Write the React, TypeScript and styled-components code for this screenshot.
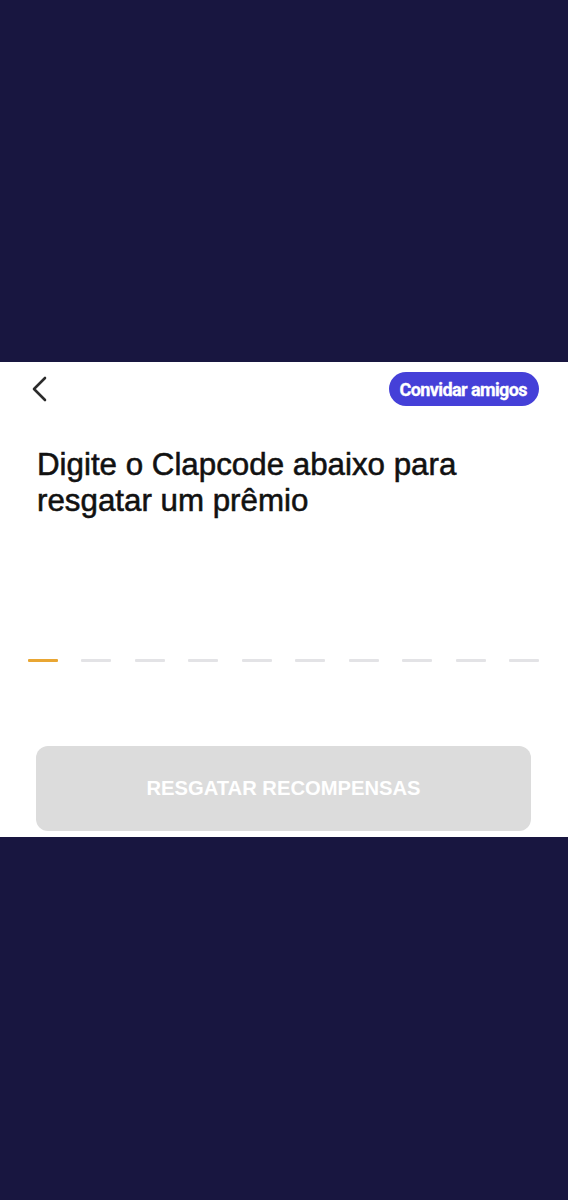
import React from 'react';
import styled, { createGlobalStyle } from 'styled-components';

const GlobalStyle = createGlobalStyle`
  html, body {
    margin: 0;
    padding: 0;
    background: #181640;
  }
  * { box-sizing: border-box; }
`;

const Screen = styled.div`
  min-height: 1200px;
  display: flex;
  flex-direction: column;
  background: #181640;
`;

const Backdrop = styled.div`
  height: 362px;
`;

const Sheet = styled.div`
  background: #ffffff;
  height: 475px;
  display: flex;
  flex-direction: column;
  padding: 10px 29px 6px 28px;
`;

const TopBar = styled.div`
  display: flex;
  align-items: center;
  justify-content: space-between;
  height: 34px;
`;

const BackButton = styled.button`
  border: none;
  background: none;
  padding: 0;
  margin-left: 3px;
  width: 20px;
  height: 26px;
  display: flex;
  align-items: center;
  cursor: pointer;
`;

const InviteButton = styled.button`
  height: 34px;
  padding: 0 12px 0 11px;
  border: none;
  border-radius: 17px;
  background: #4540d8;
  color: #ffffff;
  font-family: Roboto, "Liberation Sans", sans-serif;
  font-weight: 700;
  font-size: 18px;
  letter-spacing: -0.6px;
  -webkit-text-stroke: 0.3px #ffffff;
  cursor: pointer;
`;

const Title = styled.h1`
  margin: 41px 0 0 9px;
  font-family: "Liberation Sans", Arial, sans-serif;
  font-weight: 400;
  font-size: 31.3px;
  line-height: 36px;
  color: #111111;
  -webkit-text-stroke: 0.55px #111111;
`;

const CodeRow = styled.div`
  margin-top: 140px;
  display: flex;
  justify-content: space-between;
`;

const Dash = styled.div<{ $active?: boolean }>`
  width: 30px;
  height: 3px;
  border-radius: 1px;
  background: ${(p) => (p.$active ? '#e9a633' : '#e3e3e6')};
`;

const RedeemButton = styled.button`
  margin: 84px 8px 0 8px;
  height: 85px;
  border: none;
  border-radius: 12px;
  background: #dcdcdc;
  color: #ffffff;
  font-family: "Liberation Sans", Arial, sans-serif;
  font-weight: 700;
  font-size: 20.2px;
  letter-spacing: 0;
`;

const Chevron = () => (
  <svg width="16" height="26" viewBox="0 0 16 26" fill="none">
    <path d="M14 2 L3 13 L14 24" stroke="#2b2b2b" strokeWidth="2.6" strokeLinecap="round" strokeLinejoin="round" />
  </svg>
);

export default function App() {
  const dashes = Array.from({ length: 10 }, (_, i) => i);
  return (
    <>
      <GlobalStyle />
      <Screen>
        <Backdrop />
        <Sheet>
          <TopBar>
            <BackButton aria-label="Voltar">
              <Chevron />
            </BackButton>
            <InviteButton>Convidar amigos</InviteButton>
          </TopBar>
          <Title>
            Digite o Clapcode abaixo para
            <br />
            resgatar um prêmio
          </Title>
          <CodeRow>
            {dashes.map((i) => (
              <Dash key={i} $active={i === 0} />
            ))}
          </CodeRow>
          <RedeemButton disabled>RESGATAR RECOMPENSAS</RedeemButton>
        </Sheet>
      </Screen>
    </>
  );
}
